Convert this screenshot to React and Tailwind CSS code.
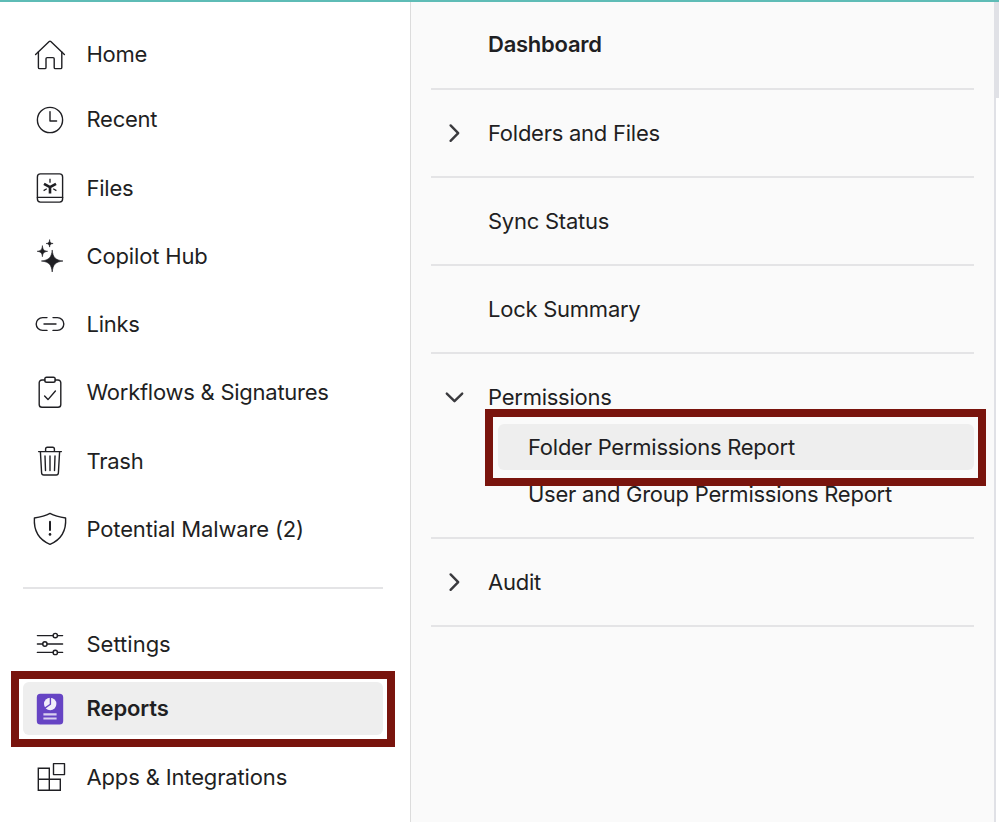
import React from 'react';
import clsx from 'clsx';

function Icon({ children, className }) {
  return (
    <svg
      width="36"
      height="36"
      viewBox="0 0 36 36"
      fill="none"
      stroke="currentColor"
      strokeWidth="1.4"
      strokeLinecap="round"
      strokeLinejoin="round"
      className={clsx('shrink-0', className)}
    >
      {children}
    </svg>
  );
}

const HomeIcon = () => (
  <Icon>
    <path d="M3.6 17.4 17.2 4.6a1.2 1.2 0 0 1 1.6 0L32.4 17.4" />
    <path d="M6.4 15v15.4q0 1.2 1.2 1.2h5.2q1.2 0 1.2-1.2v-8.6q0-1.2 1.2-1.2h5.8q1.2 0 1.2 1.2v8.6q0 1.2 1.2 1.2h5.2q1.2 0 1.2-1.2V15" />
  </Icon>
);

const RecentIcon = () => (
  <Icon>
    <circle cx="18" cy="18" r="12.6" />
    <path d="M18 9.6V19h6.6" />
  </Icon>
);

const FilesIcon = () => (
  <Icon>
    <rect x="5.4" y="3.9" width="25.2" height="28.2" rx="3" />
    <path d="M5.4 27.4h25.2" />
    <path d="M18 16.4v7.2M18 17.2l-6-3.4M18 17.2l6-3.4" strokeWidth="2.6" strokeLinecap="butt" />
    <path d="M18 8.8v4M11.6 20.6l3.2-1.8M24.4 20.6l-3.2-1.8" strokeWidth="1.3" strokeLinecap="butt" />
  </Icon>
);

const CopilotIcon = () => (
  <Icon>
    <g fill="currentColor" stroke="currentColor" strokeWidth="0.6">
      <path d="M20.2 12.4c.9 7 3 9.6 10.8 10.6-7.8 1-9.9 3.6-10.8 11-.9-7.4-3-10-10.8-11 7.8-1 9.900-3.600 10.800-10.600Z" />
      <path d="M10.400 8c.5 3.700 1.400 4.800 5.200 5.300-3.800.6-4.700 1.700-5.200 5.400-.5-3.700-1.400-4.800-5.200-5.400 3.800-.5 4.700-1.600 5.200-5.300Z" />
      <path d="M17.600 2c.3 2.500 1 3.200 3.500 3.500-2.500.3-3.200 1-3.500 3.600-.3-2.600-1-3.300-3.500-3.600 2.500-.3 3.200-1 3.500-3.500Z" />
    </g>
  </Icon>
);

const LinksIcon = () => (
  <Icon>
    <path d="M15 11.600h-4.400a6.400 6.400 0 0 0 0 12.800H15M21 11.600h4.400a6.400 6.400 0 0 1 0 12.800H21M12 18h12" />
  </Icon>
);

const WorkflowsIcon = () => (
  <Icon>
    <path d="M13 6h-3a2.800 2.800 0 0 0-2.800 2.800v21.600a2.800 2.800 0 0 0 2.800 2.800h16a2.800 2.800 0 0 0 2.800-2.800V8.800A2.800 2.800 0 0 0 26 6h-3" />
    <rect x="12.800" y="3.200" width="10.400" height="5" rx="1.800" />
    <path d="m12.600 22 3.400 3.600 7.400-8.600" />
  </Icon>
);

const TrashIcon = () => (
  <Icon>
    <path d="M6.600 8.600h22.800M13.600 8.400V6q0-1.800 1.800-1.800h5.200q1.800 0 1.800 1.800v2.400" />
    <path d="m8.400 8.800 1.200 21q.1 2.200 2.200 2.200h12.400q2.100 0 2.200-2.200l1.200-21" />
    <path d="m13 13 .5 14.600M18 13v14.600M23 13l-.5 14.600" />
  </Icon>
);

const MalwareIcon = () => (
  <Icon>
    <path d="M18 2.400c-4.800 2.600-10 3.800-15.600 4.600C1.600 19.400 6.400 28.400 18 33.400 29.600 28.400 34.400 19.400 33.600 7 28 6.200 22.800 5 18 2.400Z" />
    <path d="M18 10.800v8.200" strokeWidth="2" />
    <circle cx="18" cy="23.400" r="1.300" fill="currentColor" stroke="none" />
  </Icon>
);

const SettingsIcon = () => (
  <Icon>
    <path d="M5.400 9.600h15.800M25.400 9.600h5.200M5.400 18h5.400M15 18h15.600M5.400 26.400h15.800M25.400 26.400h5.200" />
    <circle cx="23.300" cy="9.600" r="2.200" />
    <circle cx="12.900" cy="18" r="2.200" />
    <circle cx="23.300" cy="26.400" r="2.200" />
  </Icon>
);

const ReportsIcon = () => (
  <Icon>
    <rect x="4.800" y="2.800" width="26.400" height="30.800" rx="3.600" fill="#6644c4" stroke="none" />
    <circle cx="18.200" cy="13" r="6.200" fill="#f1eefa" stroke="none" />
    <path d="M18.400 6v7.200l-6.200 4.400" stroke="#6644c4" strokeWidth="1.400" strokeLinejoin="miter" />
    <path d="M11.400 23.300h13.200M11.400 27.500h13.200" stroke="#d9d0f0" strokeWidth="2.200" strokeLinecap="butt" />
  </Icon>
);

const AppsIcon = () => (
  <Icon>
    <path d="M6.300 9.300h11v22h-11zM6.300 20.300h22v11h-11" strokeLinejoin="miter" />
    <rect x="21.500" y="4.600" width="11" height="11" />
  </Icon>
);

const mainItems = [
  { label: 'Home', icon: HomeIcon, height: 'h-[62px]', labelClass: 'pb-0.5' },
  { label: 'Recent', icon: RecentIcon, labelClass: 'pb-0.5' },
  { label: 'Files', icon: FilesIcon },
  { label: 'Copilot Hub', icon: CopilotIcon, labelClass: 'tracking-[-0.15px]' },
  { label: 'Links', icon: LinksIcon },
  { label: 'Workflows & Signatures', icon: WorkflowsIcon },
  { label: 'Trash', icon: TrashIcon },
  { label: 'Potential Malware (2)', icon: MalwareIcon, labelClass: 'tracking-[-0.15px]' },
];

function NavItem({ label, icon: ItemIcon, height = 'h-[68.2px]', active, labelClass }) {
  return (
    <a
      className={clsx(
        'flex items-center gap-[18.5px] pl-[9px] ml-[23px] mr-[27px] whitespace-nowrap',
        height,
        active && 'relative rounded-md bg-[#eeeeee] font-semibold'
      )}
    >
      <ItemIcon />
      <span className={labelClass}>{label}</span>
      {active && <Highlight className="-left-3 -right-3 -top-[11px] -bottom-3" />}
    </a>
  );
}

// Red callout frame drawn over the selected entry
function Highlight({ className }) {
  return <span className={clsx('absolute z-10 border-8 border-[#79140d] pointer-events-none', className)} />;
}

function Chevron({ open }) {
  return (
    <svg
      width="20"
      height="20"
      viewBox="0 0 20 20"
      fill="none"
      stroke="#3a3a3e"
      strokeWidth="2.4"
      strokeLinecap="round"
      strokeLinejoin="round"
    >
      {open ? <path d="m1.800 6.600 7.700 7.600 7.700-7.600" /> : <path d="m5.600 2.400 7.600 7.700-7.600 7.700" />}
    </svg>
  );
}

function ReportRow({ label, chevron, open, bold }) {
  return (
    <div className="flex items-center h-[86px]">
      <div className="w-[57px] pl-[14px]">{chevron && <Chevron open={open} />}</div>
      <span className={clsx(bold && 'font-semibold pb-0.5')}>{label}</span>
    </div>
  );
}

const Divider = () => <div className="h-0.5 bg-[#e4e4e6]" />;

export default function App() {
  return (
    <div className="h-[822px] w-[999px] flex flex-col overflow-hidden bg-white font-['Inter',sans-serif] text-[22px] leading-7 tracking-[-0.25px] text-[#1f1f23]">
      <div className="h-0.5 shrink-0 bg-[#5ebcb6]" />
      <div className="flex flex-1 min-h-0">
        {/* Main navigation */}
        <nav className="w-[411px] shrink-0 border-r border-[#dcdcdc] pt-[21.6px]">
          {mainItems.map((item) => (
            <NavItem key={item.label} {...item} />
          ))}
          <div className="h-0.5 mt-6 mb-[21px] ml-[23px] mr-[27px] bg-[#e4e4e6]" />
          <NavItem label="Settings" icon={SettingsIcon} labelClass="tracking-normal" />
          <div className="pt-1 pb-2">
            <NavItem label="Reports" icon={ReportsIcon} height="h-[53px]" labelClass="pb-0.5 tracking-[-0.1px]" active />
          </div>
          <NavItem label="Apps & Integrations" icon={AppsIcon} labelClass="tracking-[-0.15px]" />
        </nav>

        {/* Report types */}
        <section className="flex-1 bg-[#fafafa] pl-5 pr-5 whitespace-nowrap">
          <ReportRow label="Dashboard" bold />
          <Divider />
          <ReportRow label="Folders and Files" chevron />
          <Divider />
          <ReportRow label="Sync Status" />
          <Divider />
          <ReportRow label="Lock Summary" />
          <Divider />
          <ReportRow label="Permissions" chevron open />
          <div className="-mt-4 ml-[67px] pb-[19px]">
            <div className="relative flex items-center h-[46px] pl-[30px] rounded-md bg-[#eeeeee]">
              Folder Permissions Report
              <Highlight className="-left-[13px] -right-3 -top-[15px] -bottom-4" />
            </div>
            <div className="flex items-center h-12 pl-[30px]">User and Group Permissions Report</div>
          </div>
          <Divider />
          <ReportRow label="Audit" chevron />
          <Divider />
        </section>

        {/* Scrollbar */}
        <div className="w-[5px] shrink-0 border-l-2 border-[#e0e1e6] bg-white">
          <div className="h-24 bg-[#e0e1e6]" />
        </div>
      </div>
    </div>
  );
}
